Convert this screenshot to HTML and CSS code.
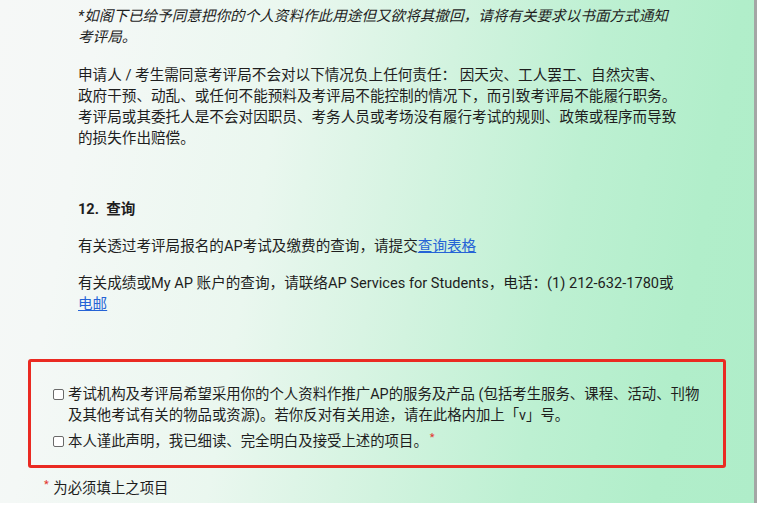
FILE: index.html
```html
<!DOCTYPE html>
<html lang="zh-CN">
<head>
<meta charset="utf-8">
<title>AP 报名须知</title>
<link rel="stylesheet" href="styles.css">
</head>
<body>
<div class="page">
  <main class="panel">
    <section class="content">
      <p class="para note">*如阁下已给予同意把你的个人资料作此用途但又欲将其撤回，请将有关要求以书面方式通知<br>考评局。</p>
      <p class="para">申请人 / 考生需同意考评局不会对以下情况负上任何责任： 因天灾、工人罢工、自然灾害、<br>政府干预、动乱、或任何不能预料及考评局不能控制的情况下，而引致考评局不能履行职务。<br>考评局或其委托人是不会对因职员、考务人员或考场没有履行考试的规则、政策或程序而导致<br>的损失作出赔偿。</p>
      <h3 class="heading">12.&nbsp; 查询</h3>
      <p class="para tight">有关透过考评局报名的AP考试及缴费的查询，请提交<a class="link" href="#">查询表格</a></p>
      <p class="para tight">有关成绩或My AP 账户的查询，请联络AP Services for Students，电话：(1) 212-632-1780或<br><a class="link" href="#">电邮</a></p>
    </section>
    <section class="consent">
      <label class="check">
        <span class="box"></span>
        <span class="check-text">考试机构及考评局希望采用你的个人资料作推广AP的服务及产品 (包括考生服务、课程、活动、刊物<br>及其他考试有关的物品或资源)。若你反对有关用途，请在此格内加上「v」号。</span>
      </label>
      <label class="check">
        <span class="box"></span>
        <span class="check-text">本人谨此声明，我已细读、完全明白及接受上述的项目。<sup class="star">*</sup></span>
      </label>
    </section>
    <p class="required"><sup class="star">*</sup> 为必须填上之项目</p>
  </main>
</div>
</body>
</html>
```

FILE: styles.css
```css
html, body {
  margin: 0;
  padding: 0;
  background: #ffffff;
}

body {
  font-family: Roboto, "Noto Sans CJK SC", sans-serif;
  color: #1e1e1e;
}

.page {
  width: 766px;
  height: 509px;
  overflow: hidden;
}

.panel {
  box-sizing: border-box;
  width: 757px;
  height: 503px;
  border-right: 3px solid #a4a6a5;
  background: linear-gradient(100deg, #f6f8f7 0%, #f4f8f6 12%, #eaf7ef 35%, #d2f3df 55%, #bdf0d2 72%, #b1eeca 88%, #afedc9 100%);
  padding-top: 6px;
  overflow: hidden;
}

.content {
  padding-left: 78px;
}

.para {
  margin: 0 0 17px 0;
  font-size: 14.6px;
  line-height: 21px;
}

.note {
  font-style: italic;
}

.heading {
  margin: 50px 0 16px 0;
  font-size: 14.6px;
  line-height: 21px;
  font-weight: bold;
}

.tight {
  margin-bottom: 16px;
}

.link {
  color: #2563d6;
  text-decoration: underline;
}

.consent {
  box-sizing: border-box;
  margin: 44px 0 0 28px;
  width: 698px;
  height: 109px;
  border: 3px solid #ea2a22;
  border-radius: 3px;
  padding: 22px 0 0 22px;
  display: flex;
  flex-direction: column;
  gap: 5px;
}

.check {
  display: flex;
  align-items: flex-start;
  gap: 4px;
  font-size: 14.4px;
  line-height: 21px;
}

.box {
  flex: none;
  box-sizing: border-box;
  width: 11px;
  height: 11px;
  margin-top: 5px;
  border: 1px solid #6a6a6a;
  border-radius: 2px;
  background: #ffffff;
}

.star {
  color: #e2312b;
  font-size: 11px;
  vertical-align: 5px;
  line-height: 0;
  margin-left: 2px;
}

.required {
  margin: 10px 0 0 44px;
  font-size: 14.4px;
  line-height: 21px;
}

.required .star {
  margin-left: 0;
  margin-right: 1px;
}
```
